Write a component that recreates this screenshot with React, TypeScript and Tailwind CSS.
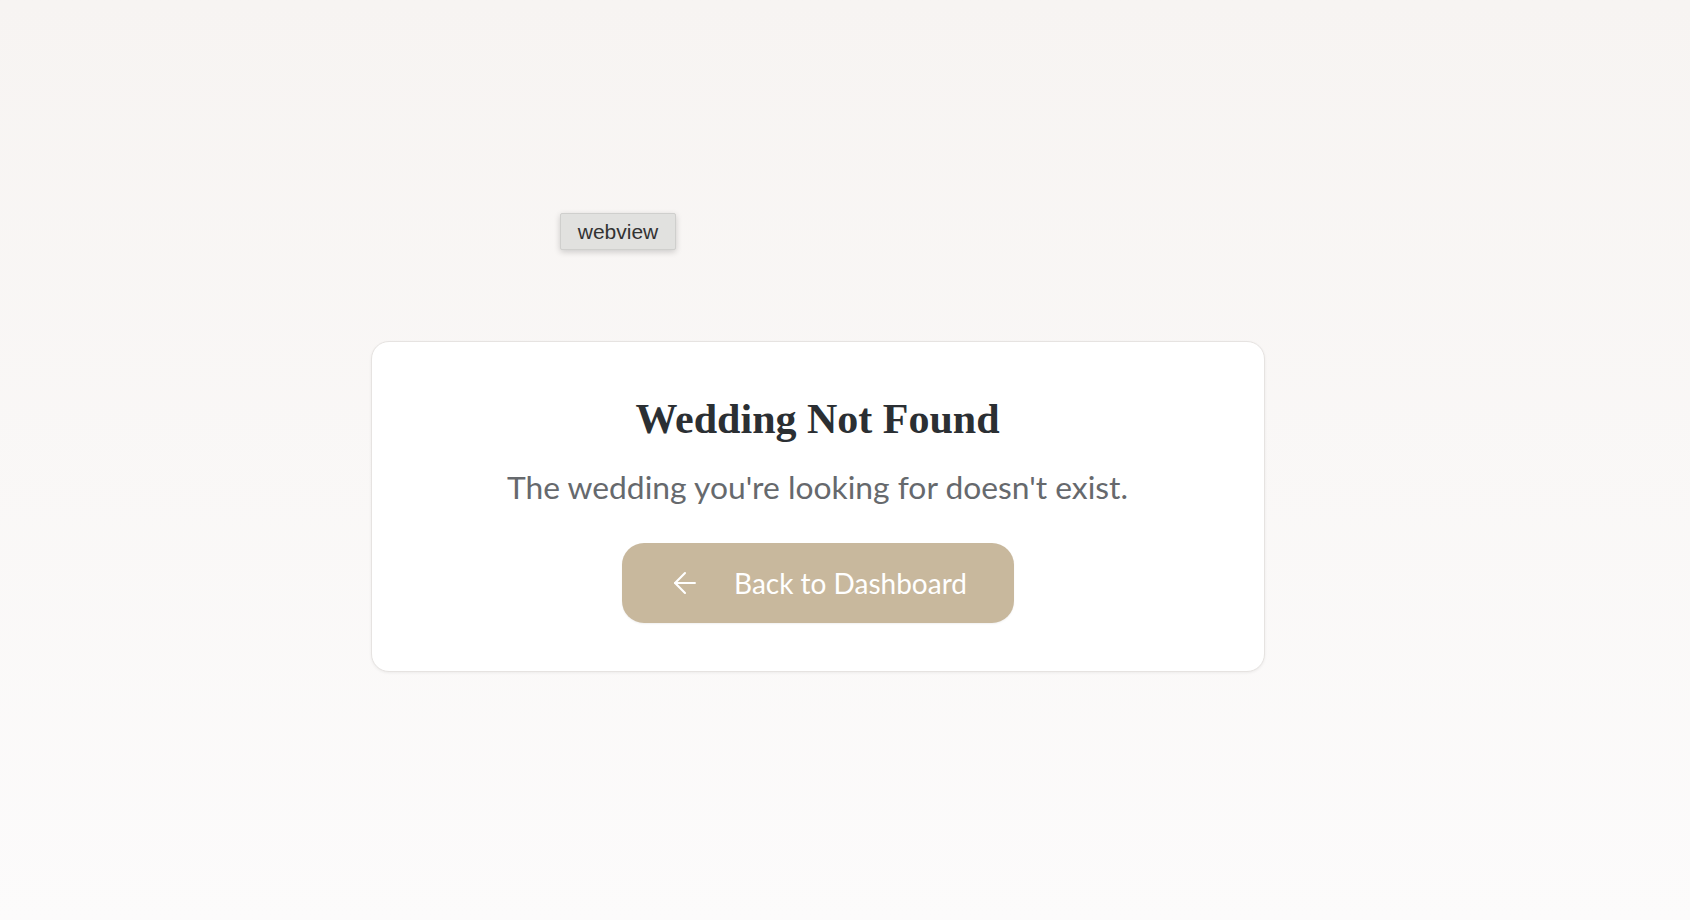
import React from "react";

export default function App() {
  return (
    <div className="relative min-h-screen w-full bg-gradient-to-b from-[#f7f4f2] to-[#fcfbfb]" style={{ fontFamily: "Lato, 'Noto Sans', sans-serif" }}>
      <div className="absolute left-[560px] top-[213px] flex h-[37px] w-[116px] items-center justify-center rounded-[2px] border border-[#cfcfcd] bg-[#e1e1df] shadow-[0_2px_6px_rgba(0,0,0,0.18)]">
        <span className="text-[21px] leading-none text-[#333333]" style={{ fontFamily: "'Liberation Sans', Arial, sans-serif" }}>webview</span>
      </div>
      <div className="flex justify-center pr-[55px] pt-[341px]">
        <div className="flex w-[894px] flex-col items-center rounded-[18px] border border-[#e6e3e1] bg-white pb-[48px] pt-[51px] shadow-[0_1px_3px_rgba(0,0,0,0.06)]">
          <h1 className="text-[42px] font-bold leading-[52px] text-[#2b2f33]" style={{ fontFamily: "'Liberation Serif', 'Times New Roman', serif" }}>
            Wedding Not Found
          </h1>
          <p className="mt-[22px] text-[31.8px] leading-[40px] text-[#66696d]">
            The wedding you're looking for doesn't exist.
          </p>
          <button className="mt-[36px] flex h-[80px] w-[392px] items-center justify-center gap-[32px] rounded-[22px] bg-[#c8b89d] text-[28px] text-white shadow-[0_1px_2px_rgba(0,0,0,0.06)]">
            <svg width="34" height="34" viewBox="0 0 24 24" fill="none" stroke="currentColor" strokeWidth="1.5" strokeLinecap="round" strokeLinejoin="round">
              <path d="M19 12H5" />
              <path d="M12 19l-7-7 7-7" />
            </svg>
            <span>Back to Dashboard</span>
          </button>
        </div>
      </div>
    </div>
  );
}
